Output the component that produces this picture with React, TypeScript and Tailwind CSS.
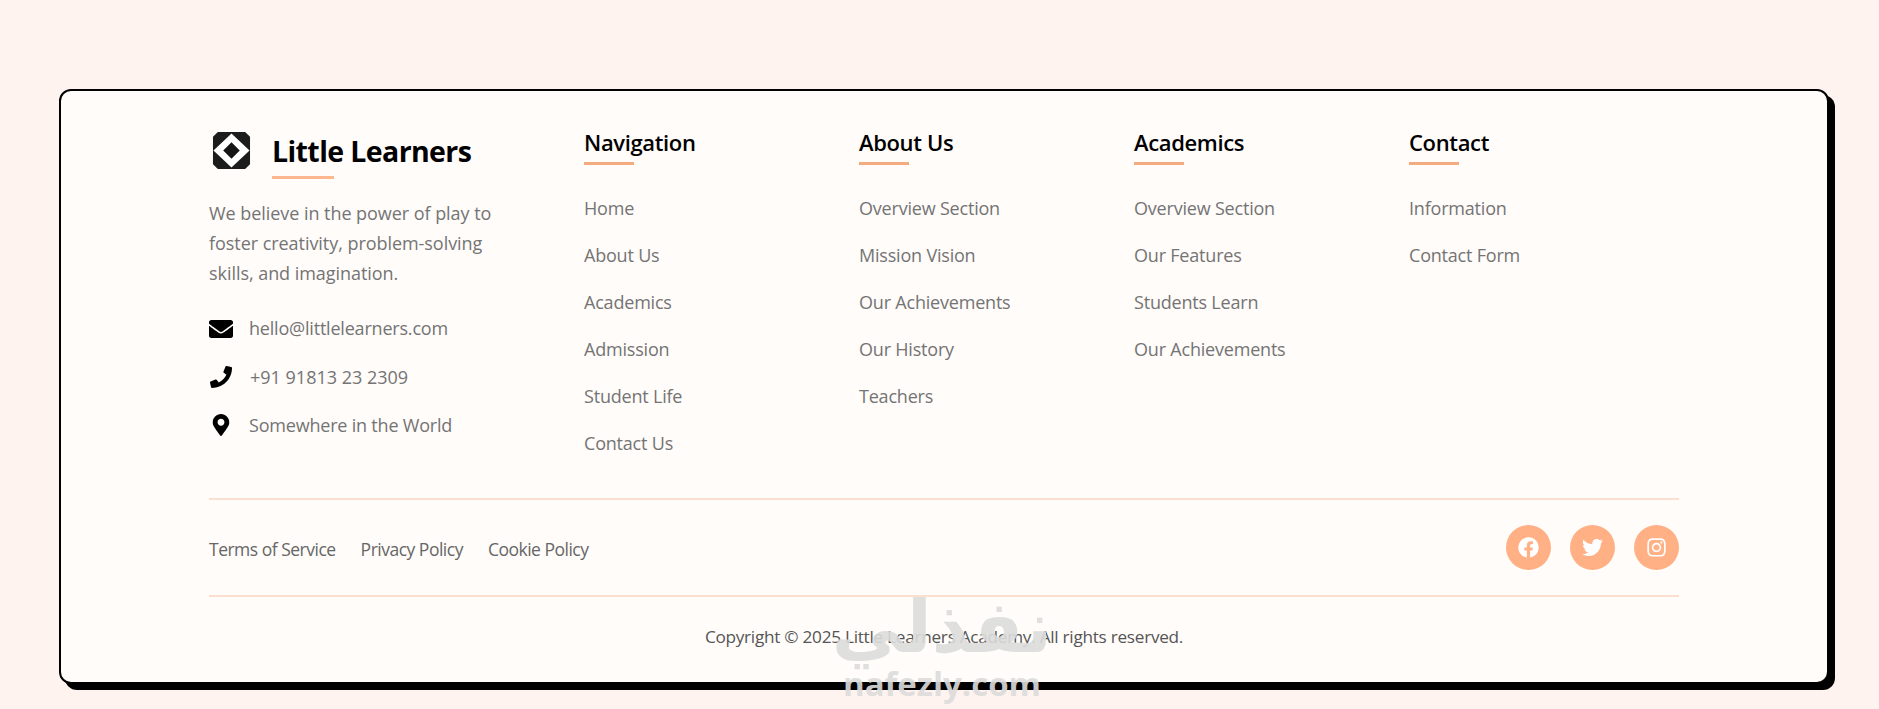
import { FaEnvelope, FaFacebook, FaInstagram, FaMapMarkerAlt, FaPhoneAlt, FaTwitter } from 'react-icons/fa'

const columns = [
  { title: 'Navigation', links: ['Home', 'About Us', 'Academics', 'Admission', 'Student Life', 'Contact Us'] },
  { title: 'About Us', links: ['Overview Section', 'Mission Vision', 'Our Achievements', 'Our History', 'Teachers'] },
  { title: 'Academics', links: ['Overview Section', 'Our Features', 'Students Learn', 'Our Achievements'] },
  { title: 'Contact', links: ['Information', 'Contact Form'] },
]

function Logo() {
  return (
    <svg width="39" height="39" viewBox="0 0 40 40" className="shrink-0">
      <path d="M6 1h28l5 5v28l-5 5H6l-5-5V6z" fill="#1c1c1c" />
      <path d="M20 2.5 38.5 20 20 37.5 1.5 20z" fill="#fff" />
      <path d="M20 11.5 28.5 20 20 28.5 11.500 20z" fill="#151515" />
    </svg>
  )
}

export default function App() {
  return (
    <div className="min-h-[709px] bg-[#fff3f0] px-[59px] pt-[89px] font-['Open_Sans','Noto_Sans',sans-serif]">
      <footer className="h-[595px] w-[1770px] rounded-xl border-2 border-black bg-[#fffcfa] px-[148px] pt-[40px] shadow-[6px_6px_0_#000]">
        <div className="flex h-[367px]">
          <div className="w-[375px] shrink-0">
            <div className="flex items-start gap-[21px] pl-[3px]">
              <Logo />
              <div>
                <h2 className="mt-[1px] text-[28.5px] leading-[38px] font-bold tracking-[-0.6px] text-black">Little Learners</h2>
                <div className="mt-[6px] h-[3px] w-[62px] bg-[#ffb78f]" />
              </div>
            </div>
            <p className="mt-[19px] w-[295px] text-[18px] leading-[30px] tracking-[-0.05px] text-[#747474]">
              We believe in the power of play to foster creativity, problem-solving skills, and imagination.
            </p>
            <ul className="mt-[16px] text-[18px] tracking-[-0.2px] text-[#747474]">
              <li className="flex h-[49px] items-center gap-4">
                <FaEnvelope className="h-6 w-6 text-black" />
                <span>hello@littlelearners.com</span>
              </li>
              <li className="flex h-[48px] items-center gap-[17px]">
                <FaPhoneAlt className="h-[22px] w-6 -scale-x-100 text-black" />
                <span className="tracking-[0px]">+91 91813 23 2309</span>
              </li>
              <li className="flex h-[48px] items-center gap-4">
                <FaMapMarkerAlt className="h-[22px] w-6 text-black" />
                <span>Somewhere in the World</span>
              </li>
            </ul>
          </div>
          {columns.map((col) => (
            <div key={col.title} className="w-[275px] shrink-0 last:w-[270px]">
              <h3 className="-mt-[2px] text-[22px] leading-[26px] font-semibold tracking-[-0.35px] text-black">{col.title}</h3>
              <div className="mt-[7px] h-[3px] w-[50px] bg-[#f5ab80]" />
              <ul className="mt-[20px] text-[18px] tracking-[-0.2px] text-[#747474]">
                {col.links.map((link) => (
                  <li key={link} className="flex h-[47px] items-center">{link}</li>
                ))}
              </ul>
            </div>
          ))}
        </div>
        <div className="h-[2px] bg-[#fbdfd0]" />
        <div className="flex h-[95px] items-center justify-between">
          <div className="mt-[3px] flex gap-[25px] text-[17.5px] tracking-[-0.5px] text-[#666]">
            <a>Terms of Service</a>
            <a>Privacy Policy</a>
            <a>Cookie Policy</a>
          </div>
          <div className="flex gap-[19px] text-[21px] text-white">
            <a className="flex h-[45px] w-[45px] items-center justify-center rounded-full bg-[#ffb085]"><FaFacebook /></a>
            <a className="flex h-[45px] w-[45px] items-center justify-center rounded-full bg-[#ffb085]"><FaTwitter /></a>
            <a className="flex h-[45px] w-[45px] items-center justify-center rounded-full bg-[#ffb085]"><FaInstagram /></a>
          </div>
        </div>
        <div className="h-[2px] bg-[#fbdfd0]" />
        <p className="mt-[27px] text-center text-[17.2px] tracking-[-0.27px] text-[#555]">
          Copyright © 2025 Little Learners Academy. All rights reserved.
        </p>
      </footer>
      <div className="pointer-events-none absolute top-[587px] left-[822px] flex w-[240px] flex-col items-center text-[#dcdcdc] opacity-90">
        <span className="font-['DejaVu_Sans',sans-serif] text-[72px] leading-[80px] font-bold">نفذلي</span>
        <span className="font-['Open_Sans',sans-serif] text-[33px] leading-[34px] font-bold">nafezly.com</span>
      </div>
    </div>
  )
}
